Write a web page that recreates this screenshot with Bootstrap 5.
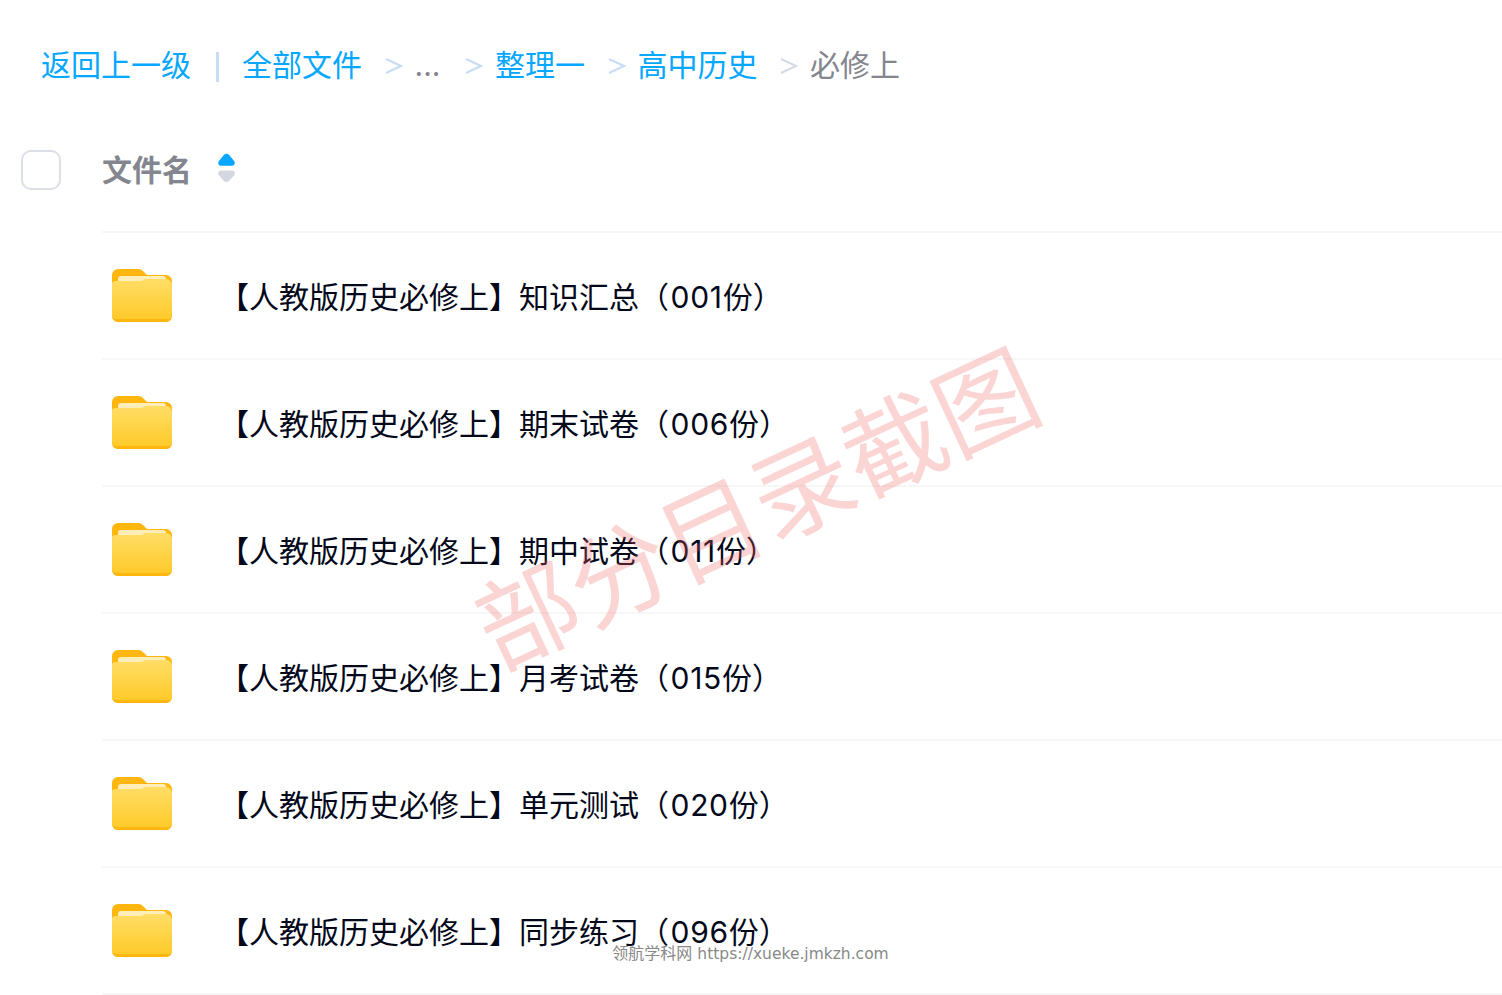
<!DOCTYPE html>
<html lang="zh-CN"><head><meta charset="utf-8"><title>文件列表</title>
<link rel="stylesheet" href="https://cdn.jsdelivr.net/npm/bootstrap@5.3.0/dist/css/bootstrap.min.css">
<style>
html,body{height:995px;overflow:hidden;background:#fff}
body{font-family:Inter,"Noto Sans CJK SC",sans-serif;color:#03081a;position:relative;font-kerning:none}
.crumbs{height:130px;padding:0 0 0 41px;font-size:30px;line-height:40px;padding-top:45px}
.crumbs a{color:#06a7ff;text-decoration:none}
.crumb-bar{width:3px;height:30px;background:#c8dcf5;margin:7px 23px 0 25px}
.crumb-sep{width:18px;height:20px;margin:11px 12px 0 22.5px;flex:none}
.crumb-dots{color:#84868f;width:28px;margin-right:0}
.crumb-last{color:#84868f}
.head-row{height:101px;padding-left:21px}
.check-box{width:40px;height:40px;border:2px solid #dcdfe6;border-radius:10px;margin-top:20px}
.head-title{font-size:30px;font-weight:700;color:#84868f;line-height:40px;margin:20px 0 0 41px}
.sorter{margin:22px 0 0 25px;width:19px}
.file-list{margin-left:102px}
.file-row{height:127px;border-top:2px solid #f7f7f7;padding-left:10px}
.file-row:last-child{border-bottom:2px solid #f7f7f7;height:129px}
.file-name{font-size:30px;line-height:40px;margin:2px 0 0 47px}
.count-num{letter-spacing:.7px;margin-left:1.500px}
.folder-ico{width:60px;height:54px;flex:none;margin-bottom:1px}
.stamp{position:absolute;left:451px;top:438px;font-size:101px;line-height:130px;white-space:nowrap;color:rgba(240,100,100,.28);transform:rotate(-25deg);font-weight:400;pointer-events:none;font-family:"Noto Sans CJK SC",sans-serif}
.site-note{position:absolute;left:0;right:0;top:943px;text-align:center;font:16px/21px "DejaVu Sans","Noto Sans CJK SC",sans-serif;color:#888;padding-right:1px}
.site-note span{font-size:15.5px}
</style></head><body>
<svg width="0" height="0" class="d-block position-absolute"><defs>
<linearGradient id="fg" x1="0" y1="0" x2="0" y2="1"><stop offset="0" stop-color="#ffdd66"/><stop offset="1" stop-color="#ffc926"/></linearGradient>
<symbol id="folder" viewBox="0 0 60 54">
<path d="M0 7a6 6 0 0 1 6-6h20c3 0 4 1 6 3l3 3h19a6 6 0 0 1 6 6v20H0z" fill="#ffb60f"/>
<rect x="6" y="8" width="48" height="8" rx="3" fill="#ffeeb8"/>
<path d="M0 16c0-2 1-3 4-3h24c3 0 4-2 6-2h20a6 6 0 0 1 6 6v31a6 6 0 0 1-6 6H6a6 6 0 0 1-6-6z" fill="url(#fg)"/>
<path d="M0 48a6 6 0 0 0 6 6h48a6 6 0 0 0 6-6v-1a4 4 0 0 1-4 4H4a4 4 0 0 1-4-4z" fill="#ffb60f"/>
</symbol></defs></svg>

<nav class="crumbs d-flex align-items-start">
<a href="#">返回上一级</a><span class="crumb-bar"></span><a href="#">全部文件</a>
<svg class="crumb-sep" viewBox="0 0 18 20"><path d="M1 3l15 7-15 7" fill="none" stroke="#c8dcf5" stroke-width="2"/></svg>
<span class="crumb-dots">...</span>
<svg class="crumb-sep" viewBox="0 0 18 20"><path d="M1 3l15 7-15 7" fill="none" stroke="#c8dcf5" stroke-width="2"/></svg>
<a href="#">整理一</a>
<svg class="crumb-sep" viewBox="0 0 18 20"><path d="M1 3l15 7-15 7" fill="none" stroke="#c8dcf5" stroke-width="2"/></svg>
<a href="#">高中历史</a>
<svg class="crumb-sep" viewBox="0 0 18 20"><path d="M1 3l15 7-15 7" fill="none" stroke="#d4dbe5" stroke-width="2"/></svg>
<span class="crumb-last">必修上</span>
</nav>

<div class="head-row d-flex align-items-start">
<span class="check-box"></span>
<span class="head-title">文件名</span>
<svg class="sorter" height="32" viewBox="0 0 20 32"><path d="M10 1c1 0 2 .5 3 1.500l5 6c1.500 2 .5 5-2 5H4c-2.500 0-3.500-3-2-5l5-6C8 1.500 9 1 10 1z" fill="#06a7ff"/><path d="M10 31c1 0 2-.5 3-1.500l5-6c1.500-2 .5-5-2-5H4c-2.500 0-3.500 3-2 5l5 6c1 1 2 1.500 3 1.500z" fill="#d4d7e0"/></svg>
</div>

<div class="file-list">
<div class="file-row d-flex align-items-center"><svg class="folder-ico"><use href="#folder"/></svg><span class="file-name">【人教版历史必修上】知识汇总（<span class="count-num">001</span>份）</span></div>
<div class="file-row d-flex align-items-center"><svg class="folder-ico"><use href="#folder"/></svg><span class="file-name">【人教版历史必修上】期末试卷（<span class="count-num">006</span>份）</span></div>
<div class="file-row d-flex align-items-center"><svg class="folder-ico"><use href="#folder"/></svg><span class="file-name">【人教版历史必修上】期中试卷（<span class="count-num">011</span>份）</span></div>
<div class="file-row d-flex align-items-center"><svg class="folder-ico"><use href="#folder"/></svg><span class="file-name">【人教版历史必修上】月考试卷（<span class="count-num">015</span>份）</span></div>
<div class="file-row d-flex align-items-center"><svg class="folder-ico"><use href="#folder"/></svg><span class="file-name">【人教版历史必修上】单元测试（<span class="count-num">020</span>份）</span></div>
<div class="file-row d-flex align-items-center"><svg class="folder-ico"><use href="#folder"/></svg><span class="file-name">【人教版历史必修上】同步练习（<span class="count-num">096</span>份）</span></div>
</div>

<div class="stamp">部分目录截图</div>
<div class="site-note">领航学科网 <span>https://xueke.jmkzh.com</span></div>
<script src="https://cdn.jsdelivr.net/npm/bootstrap@5.3.0/dist/js/bootstrap.bundle.min.js"></script>
</body></html>
